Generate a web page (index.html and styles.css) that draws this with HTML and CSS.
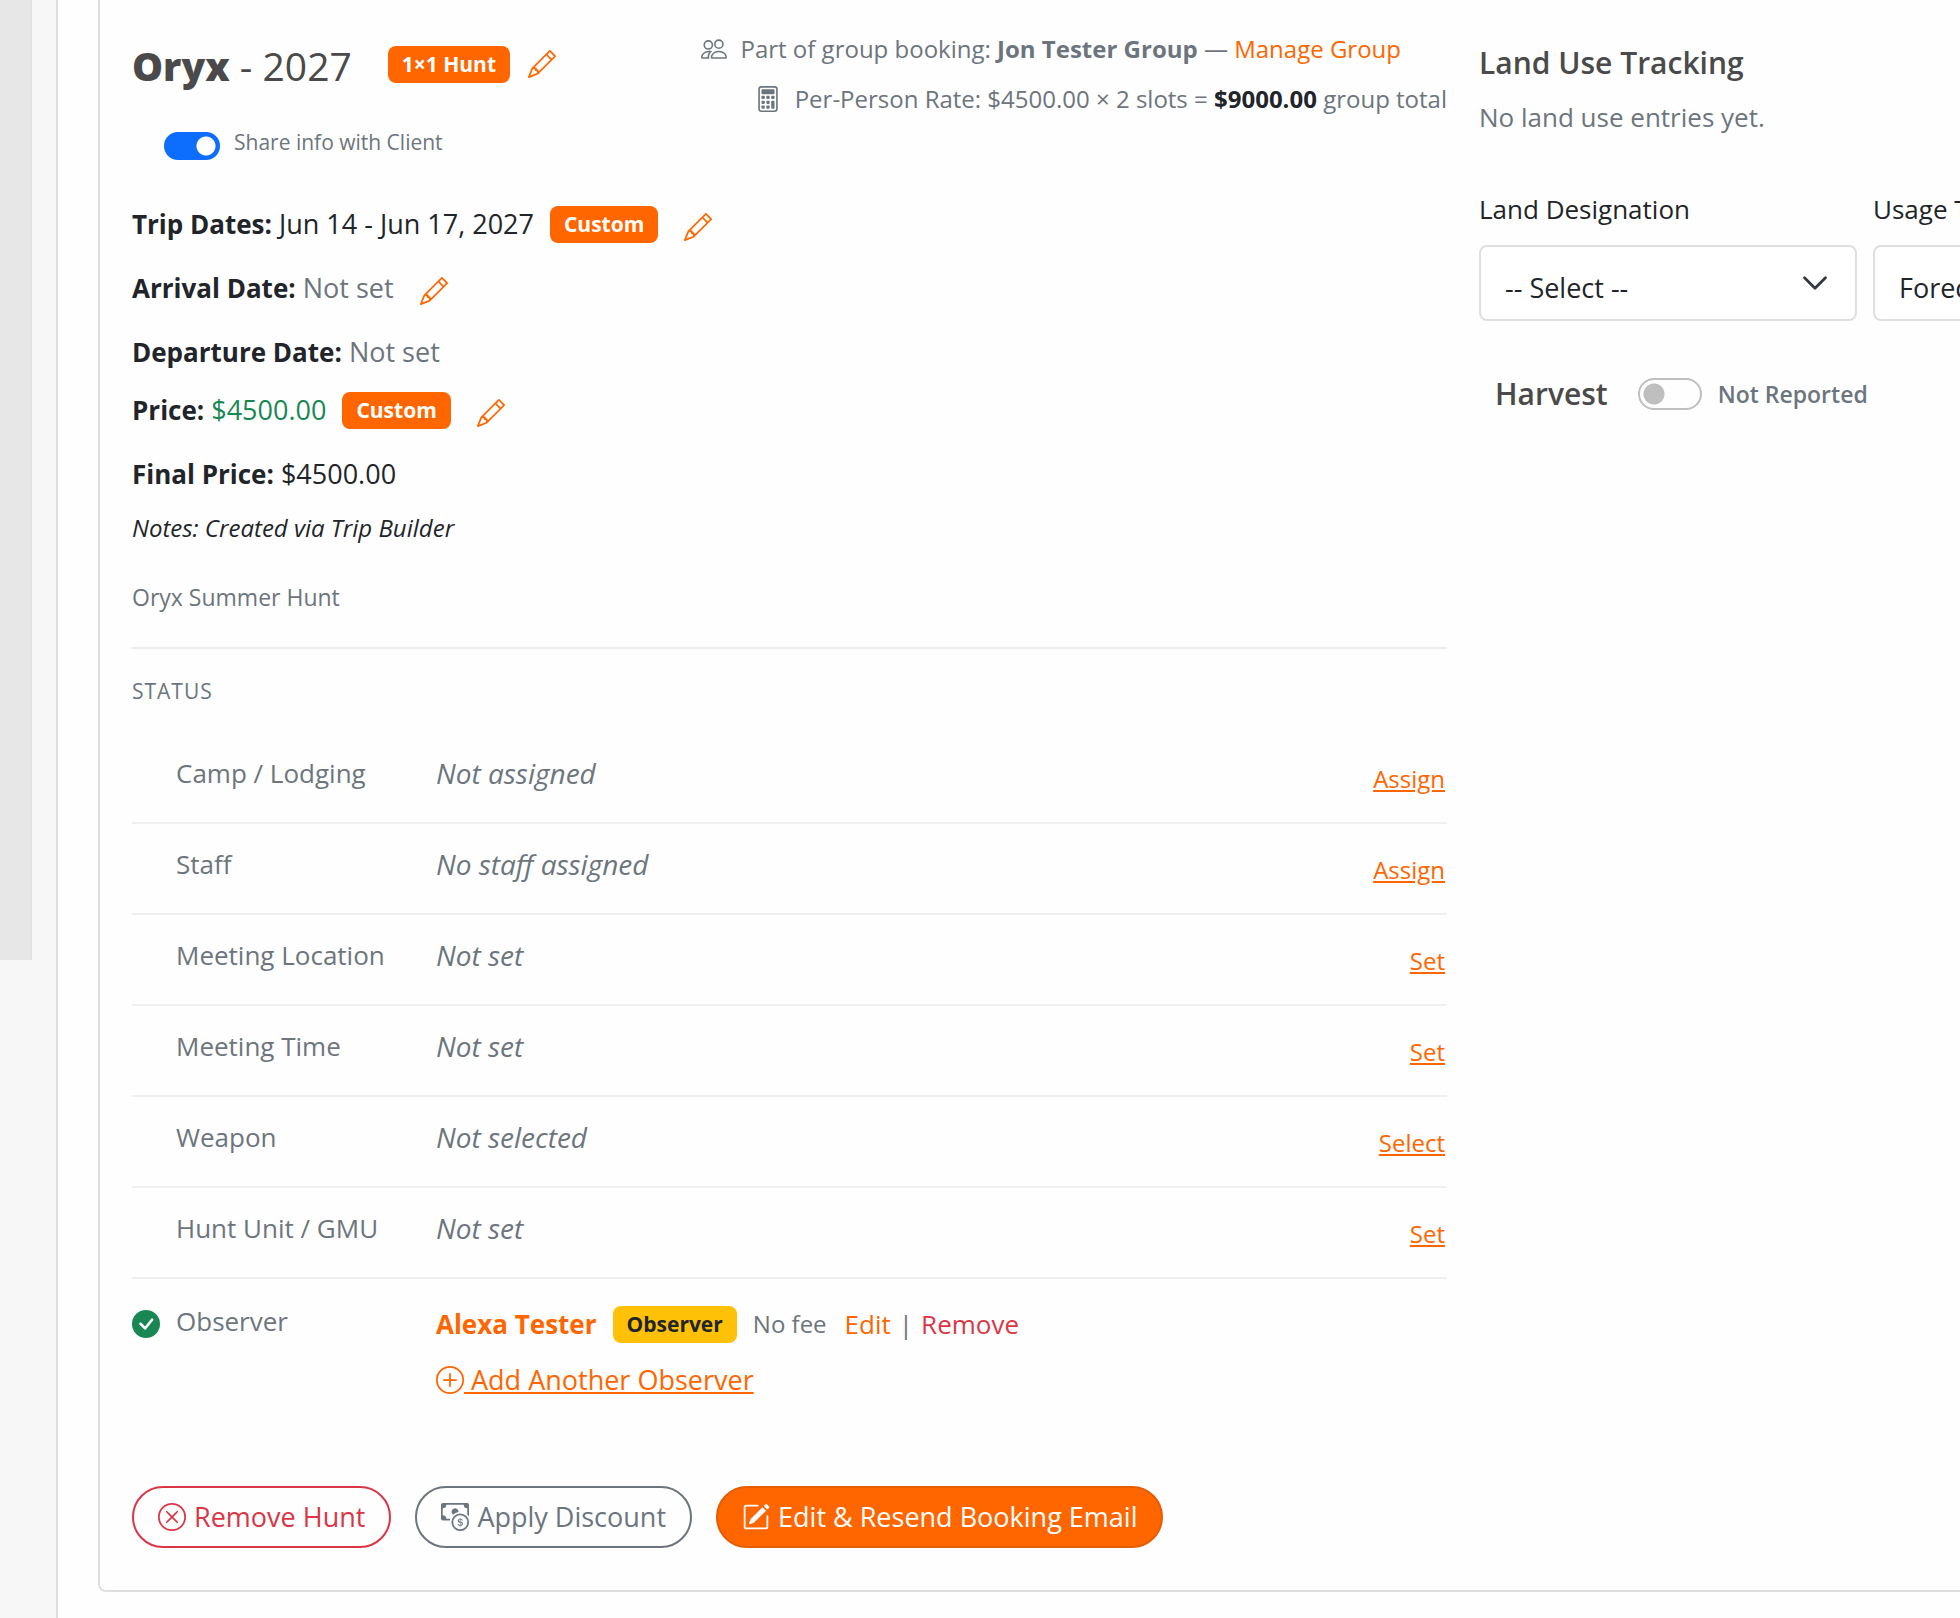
FILE: index.html
```html
<!DOCTYPE html>
<html lang="en">
<head>
    <meta charset="UTF-8">
    <title>Oryx - 2027</title>
    <link rel="stylesheet" href="styles.css">
</head>
<body>
    <!-- shared icons -->
    <svg class="sprite" aria-hidden="true">
        <symbol id="pencil" viewBox="0 0 16 16">
            <path d="M12.146.146a.5.5 0 0 1 .708 0l3 3a.5.5 0 0 1 0 .708l-10 10a.5.5 0 0 1-.168.11l-5 2a.5.5 0 0 1-.65-.65l2-5a.5.5 0 0 1 .11-.168zM11.207 2.5 13.5 4.793 14.793 3.5 12.5 1.207zm1.586 3L10.5 3.207 4 9.707V10h.5a.5.5 0 0 1 .5.5v.5h.5a.5.5 0 0 1 .5.5v.5h.293zm-9.761 5.175-.106.106-1.528 3.821 3.821-1.528.106-.106A.5.5 0 0 1 5 12.5V12h-.5a.5.5 0 0 1-.5-.5V11h-.5a.5.5 0 0 1-.468-.325"/>
        </symbol>
        <symbol id="people" viewBox="0 0 16 16">
            <path d="M15 14s1 0 1-1-1-4-5-4-5 3-5 4 1 1 1 1zm-7.978-1L7 12.996c.001-.264.167-1.03.76-1.72C8.312 10.629 9.282 10 11 10c1.717 0 2.687.63 3.24 1.276.593.69.758 1.457.76 1.72l-.008.002-.014.002zM11 7a2 2 0 1 0 0-4 2 2 0 0 0 0 4m3-2a3 3 0 1 1-6 0 3 3 0 0 1 6 0M6.936 9.28a6 6 0 0 0-1.23-.247A7 7 0 0 0 5 9c-4 0-5 3-5 4q0 1 1 1h4.216A2.24 2.24 0 0 1 5 13c0-1.01.377-2.042 1.09-2.904.243-.294.526-.569.846-.816M4.92 10A5.5 5.5 0 0 0 4 13H1c0-.26.164-1.03.76-1.724.545-.636 1.492-1.256 3.16-1.275ZM1.5 5.5a3 3 0 1 1 6 0 3 3 0 0 1-6 0m3-2a2 2 0 1 0 0 4 2 2 0 0 0 0-4"/>
        </symbol>
        <symbol id="calculator" viewBox="0 0 16 16">
            <path d="M12 1a1 1 0 0 1 1 1v12a1 1 0 0 1-1 1H4a1 1 0 0 1-1-1V2a1 1 0 0 1 1-1zM4 0a2 2 0 0 0-2 2v12a2 2 0 0 0 2 2h8a2 2 0 0 0 2-2V2a2 2 0 0 0-2-2z"/>
            <rect x="4" y="2" width="8" height="3" rx=".5"/>
            <rect x="4" y="6" width="2" height="2" rx=".5"/>
            <rect x="7" y="6" width="2" height="2" rx=".5"/>
            <rect x="10" y="6" width="2" height="2" rx=".5"/>
            <rect x="4" y="9" width="2" height="2" rx=".5"/>
            <rect x="7" y="9" width="2" height="2" rx=".5"/>
            <rect x="4" y="12" width="2" height="2" rx=".5"/>
            <rect x="7" y="12" width="2" height="2" rx=".5"/>
            <rect x="10" y="9" width="2" height="5" rx=".5"/>
        </symbol>
        <symbol id="check-fill" viewBox="0 0 16 16">
            <path d="M16 8A8 8 0 1 1 0 8a8 8 0 0 1 16 0m-3.97-3.03a.75.75 0 0 0-1.08.022L7.477 9.417 5.384 7.323a.75.75 0 0 0-1.06 1.06L6.97 11.03a.75.75 0 0 0 1.079-.02l3.992-4.99a.75.75 0 0 0-.01-1.05z"/>
        </symbol>
        <symbol id="plus-circle" viewBox="0 0 16 16">
            <path d="M8 15A7 7 0 1 1 8 1a7 7 0 0 1 0 14m0 1A8 8 0 1 0 8 0a8 8 0 0 0 0 16"/>
            <path d="M8 4a.5.5 0 0 1 .5.5v3h3a.5.5 0 0 1 0 1h-3v3a.5.5 0 0 1-1 0v-3h-3a.5.5 0 0 1 0-1h3v-3A.5.5 0 0 1 8 4"/>
        </symbol>
        <symbol id="x-circle" viewBox="0 0 16 16">
            <path d="M8 15A7 7 0 1 1 8 1a7 7 0 0 1 0 14m0 1A8 8 0 1 0 8 0a8 8 0 0 0 0 16"/>
            <path d="M4.646 4.646a.5.5 0 0 1 .708 0L8 7.293l2.646-2.647a.5.5 0 0 1 .708.708L8.707 8l2.647 2.646a.5.5 0 0 1-.708.708L8 8.707l-2.646 2.647a.5.5 0 0 1-.708-.708L7.293 8 4.646 5.354a.5.5 0 0 1 0-.708"/>
        </symbol>
        <symbol id="cash-coin" viewBox="0 0 16 16">
            <path fill-rule="evenodd" d="M11 15a4 4 0 1 0 0-8 4 4 0 0 0 0 8m5-4a5 5 0 1 1-10 0 5 5 0 0 1 10 0"/>
            <path d="M9.438 11.944c.047.596.518 1.06 1.363 1.116v.44h.375v-.443c.875-.061 1.386-.529 1.386-1.207 0-.618-.39-.936-1.09-1.1l-.296-.07v-1.2c.376.043.614.248.671.532h.658c-.047-.575-.54-1.024-1.329-1.073V8.5h-.375v.45c-.747.073-1.255.522-1.255 1.158 0 .562.378.92 1.007 1.066l.248.061v1.272c-.384-.058-.639-.27-.696-.563h-.668zm1.36-1.354c-.369-.085-.569-.26-.569-.522 0-.294.216-.514.572-.578v1.1zm.432.746c.449.104.655.272.655.569 0 .339-.257.571-.709.614v-1.195z"/>
            <path d="M1 0a1 1 0 0 0-1 1v8a1 1 0 0 0 1 1h4.083q.088-.517.258-1H3a2 2 0 0 0-2-2V3a2 2 0 0 0 2-2h10a2 2 0 0 0 2 2v3.528c.38.34.717.728 1 1.154V1a1 1 0 0 0-1-1z"/>
            <path d="M9.998 5.083 10 5a2 2 0 1 0-3.132 1.65 6 6 0 0 1 3.13-1.567"/>
        </symbol>
        <symbol id="pencil-square" viewBox="0 0 16 16">
            <path d="M15.502 1.94a.5.5 0 0 1 0 .706L14.459 3.69l-2-2L13.502.646a.5.5 0 0 1 .707 0l1.293 1.293zm-1.75 2.456-2-2L4.939 9.21a.5.5 0 0 0-.121.196l-.805 2.414a.25.25 0 0 0 .316.316l2.414-.805a.5.5 0 0 0 .196-.12l6.813-6.814z"/>
            <path fill-rule="evenodd" d="M1 13.5A1.5 1.5 0 0 0 2.5 15h11a1.5 1.5 0 0 0 1.5-1.5v-6a.5.5 0 0 0-1 0v6a.5.5 0 0 1-.5.5h-11a.5.5 0 0 1-.5-.5v-11a.5.5 0 0 1 .5-.5H9a.5.5 0 0 0 0-1H2.5A1.5 1.5 0 0 0 1 2.5z"/>
        </symbol>
    </svg>

    <div class="page">
        <aside class="sidebar">
            <div class="sidebar-panel"></div>
        </aside>

        <main class="content">
            <div class="hunt-card">
                <section class="hunt-main">
                    <header class="hunt-header">
                        <div class="hunt-heading">
                            <div class="title-row">
                                <h2 class="hunt-title"><strong>Oryx</strong> - 2027</h2>
                                <span class="badge">1×1 Hunt</span>
                                <button class="icon-btn" type="button" aria-label="Edit hunt type"><svg class="icon"><use href="#pencil"/></svg></button>
                            </div>
                            <div class="share-row">
                                <input class="switch" type="checkbox" role="switch" id="shareInfo" checked>
                                <label for="shareInfo">Share info with Client</label>
                            </div>
                        </div>
                        <div class="group-info">
                            <p class="group-booking">
                                <svg class="icon icon-sm"><use href="#people"/></svg>
                                <span>Part of group booking: <strong>Jon Tester Group</strong> — <a href="#">Manage Group</a></span>
                            </p>
                            <p>
                                <svg class="icon icon-sm"><use href="#calculator"/></svg>
                                <span>Per-Person Rate: $4500.00 × 2 slots = <strong class="dark">$9000.00</strong> group total</span>
                            </p>
                        </div>
                    </header>

                    <div class="details">
                        <div class="detail">
                            <span><strong>Trip Dates:</strong> Jun 14 - Jun 17, 2027</span>
                            <span class="badge">Custom</span>
                            <button class="icon-btn spaced" type="button" aria-label="Edit trip dates"><svg class="icon"><use href="#pencil"/></svg></button>
                        </div>
                        <div class="detail">
                            <span><strong>Arrival Date:</strong> <span class="muted">Not set</span></span>
                            <button class="icon-btn spaced" type="button" aria-label="Edit arrival date"><svg class="icon"><use href="#pencil"/></svg></button>
                        </div>
                        <div class="detail detail-tight">
                            <span><strong>Departure Date:</strong> <span class="muted">Not set</span></span>
                        </div>
                        <div class="detail">
                            <span><strong>Price:</strong> <span class="price">$4500.00</span></span>
                            <span class="badge">Custom</span>
                            <button class="icon-btn spaced" type="button" aria-label="Edit price"><svg class="icon"><use href="#pencil"/></svg></button>
                        </div>
                        <div class="detail detail-tight">
                            <span><strong>Final Price:</strong> $4500.00</span>
                        </div>
                    </div>
                    <p class="notes">Notes: Created via Trip Builder</p>
                    <p class="hunt-name">Oryx Summer Hunt</p>

                    <h3 class="status-title">Status</h3>
                    <div class="status-row">
                        <span></span>
                        <span class="label">Camp / Lodging</span>
                        <em>Not assigned</em>
                        <a href="#">Assign</a>
                    </div>
                    <div class="status-row">
                        <span></span>
                        <span class="label">Staff</span>
                        <em>No staff assigned</em>
                        <a href="#">Assign</a>
                    </div>
                    <div class="status-row">
                        <span></span>
                        <span class="label">Meeting Location</span>
                        <em>Not set</em>
                        <a href="#">Set</a>
                    </div>
                    <div class="status-row">
                        <span></span>
                        <span class="label">Meeting Time</span>
                        <em>Not set</em>
                        <a href="#">Set</a>
                    </div>
                    <div class="status-row">
                        <span></span>
                        <span class="label">Weapon</span>
                        <em>Not selected</em>
                        <a href="#">Select</a>
                    </div>
                    <div class="status-row">
                        <span></span>
                        <span class="label">Hunt Unit / GMU</span>
                        <em>Not set</em>
                        <a href="#">Set</a>
                    </div>
                    <div class="observer-row">
                        <svg class="icon done"><use href="#check-fill"/></svg>
                        <span class="label">Observer</span>
                        <div class="observers">
                            <div class="observer">
                                <a class="observer-name" href="#">Alexa Tester</a>
                                <span class="badge badge-warning">Observer</span>
                                <span class="fee">No fee</span>
                                <span class="observer-actions"><button class="text-btn" type="button">Edit</button><span class="bar">|</span><button class="text-btn danger" type="button">Remove</button></span>
                            </div>
                            <a class="add-observer" href="#"><svg class="icon"><use href="#plus-circle"/></svg><span>&nbsp;Add Another Observer</span></a>
                        </div>
                    </div>

                    <div class="actions">
                        <button class="btn btn-danger" type="button"><svg class="icon"><use href="#x-circle"/></svg>Remove Hunt</button>
                        <button class="btn btn-secondary" type="button"><svg class="icon"><use href="#cash-coin"/></svg>Apply Discount</button>
                        <button class="btn btn-primary" type="button"><svg class="icon"><use href="#pencil-square"/></svg>Edit &amp; Resend Booking Email</button>
                    </div>
                </section>

                <section class="hunt-side">
                    <h3 class="side-title">Land Use Tracking</h3>
                    <p class="side-empty">No land use entries yet.</p>
                    <div class="fields">
                        <div class="field">
                            <label for="landDesignation">Land Designation</label>
                            <select id="landDesignation">
                                <option>-- Select --</option>
                            </select>
                        </div>
                        <div class="field">
                            <label for="usageType">Usage Type</label>
                            <select id="usageType">
                                <option>Forecast</option>
                            </select>
                        </div>
                    </div>
                    <div class="harvest">
                        <h3 class="side-title">Harvest</h3>
                        <input class="switch switch-lg" type="checkbox" role="switch" id="harvest">
                        <label for="harvest">Not Reported</label>
                    </div>
                </section>
            </div>
        </main>
    </div>
</body>
</html>
```
FILE: styles.css
```css
* {
    margin: 0;
    padding: 0;
    box-sizing: border-box;
}

body {
    font-family: "Open Sans", "Noto Sans", sans-serif;
    font-size: 26px;
    line-height: 40px;
    color: #212529;
    background: #fefefe;
    overflow: hidden;
}

a {
    color: #ff6600;
}

button {
    font: inherit;
    cursor: pointer;
}

.sprite {
    display: none;
}

.icon {
    width: 28px;
    height: 28px;
    flex: none;
    fill: currentColor;
}

.icon-sm {
    width: 26px;
    height: 26px;
}

.muted {
    color: #6c757d;
}

.price {
    color: #198754;
}

/* Page frame */
.page {
    display: flex;
    min-height: 100vh;
}

.sidebar {
    width: 58px;
    flex: none;
    background: #f7f7f7;
    border-right: 2px solid #dedede;
}

.sidebar-panel {
    width: 32px;
    height: 960px;
    background: #e7e7e7;
    border-right: 2px solid #e3e3e3;
}

.content {
    flex: 1;
    min-width: 0;
    padding-left: 40px;
}

.hunt-card {
    display: grid;
    grid-template-columns: minmax(0, 1fr) 481px;
    column-gap: 32px;
    padding: 24px 0 42px 32px;
    border: 2px solid #dedede;
    border-width: 0 0 2px 2px;
    border-radius: 0 0 0 8px;
}

/* Header */
.hunt-header {
    display: flex;
    justify-content: space-between;
}

.title-row {
    display: flex;
    align-items: center;
    height: 80px;
}

.hunt-title {
    margin-right: 36px;
    padding-top: 4px;
    font-size: 39px;
    font-weight: 500;
    color: #4a4a4a;
}

.hunt-title strong {
    font-weight: 800;
}

.badge {
    padding: 0 14px;
    border-radius: 8px;
    background: #ff6600;
    color: #fff;
    font-size: 21px;
    font-weight: 700;
    line-height: 37px;
}

.badge-warning {
    background: #ffc107;
    color: #212529;
}

.icon-btn {
    display: flex;
    margin-left: 18px;
    border: none;
    background: none;
    color: #ff6600;
}

.icon-btn.spaced {
    margin-left: 26px;
    padding-top: 6px;
}

.share-row {
    display: flex;
    align-items: flex-start;
    gap: 14px;
    height: 60px;
    padding: 22px 0 0 32px;
}

.share-row .switch {
    margin-top: 6px;
}

.share-row label {
    color: #6c757d;
    font-size: 21px;
    line-height: 32px;
}

.switch {
    appearance: none;
    width: 56px;
    height: 28px;
    border-radius: 28px;
    border: 2px solid #bfbfbf;
    background: radial-gradient(circle, #bfbfbf 10px, transparent 11px) left center / 28px 28px no-repeat;
}

.switch:checked {
    border-color: #0d6efd;
    background: #0d6efd radial-gradient(circle, #fff 9px, transparent 10px) right center / 24px 24px no-repeat;
}

.switch-lg {
    width: 64px;
    height: 32px;
}

.group-info {
    color: #6c757d;
    font-size: 24px;
}

.group-info p {
    display: flex;
    align-items: center;
    justify-content: flex-end;
    gap: 14px;
    height: 50px;
}

.group-info .group-booking {
    padding-right: 46px;
}

.group-info a {
    text-decoration: none;
}

.dark {
    color: #212529;
}

/* Details */
.details {
    padding-top: 28px;
    font-size: 27px;
}

.details strong {
    font-size: 26px;
}

.detail {
    display: flex;
    align-items: center;
    height: 64px;
}

.detail .badge {
    margin-left: 16px;
}

.detail-tight {
    height: 58px;
    padding-top: 6px;
}

.notes {
    padding-top: 8px;
    font-size: 24px;
    font-style: italic;
}

.hunt-name {
    padding: 29px 0 30px;
    border-bottom: 2px solid #e9ecef;
    color: #6c757d;
    font-size: 23px;
}

/* Status */
.status-title {
    padding: 22px 0;
    color: #6c757d;
    font-size: 21px;
    font-weight: 400;
    letter-spacing: 1px;
    text-transform: uppercase;
}

.status-row,
.observer-row {
    display: grid;
    grid-template-columns: 28px 244px 1fr auto;
    column-gap: 16px;
    color: #6c757d;
}

.status-row {
    align-items: start;
    height: 91px;
    padding: 20px 2px 0 0;
    border-bottom: 2px solid #f0f0f0;
}

.status-row em {
    font-size: 28px;
}

.status-row a {
    padding-top: 6px;
    font-size: 24px;
}

.observer-row {
    padding-top: 22px;
}

.done {
    margin-top: 9px;
    color: #198754;
}

.observer {
    display: flex;
    align-items: center;
    padding-top: 3px;
}

.observer-name {
    margin-right: 16px;
    font-weight: 700;
    text-decoration: none;
}

.fee {
    margin: 0 18px 0 16px;
    font-size: 24px;
}

.observer-actions {
    display: flex;
    gap: 8px;
}

.text-btn {
    border: none;
    background: none;
    color: #ff6600;
}

.danger {
    color: #dc3545;
}

.bar {
    color: #6c757d;
}

.add-observer {
    display: inline-flex;
    align-items: center;
    padding-top: 16px;
    font-size: 27px;
}

/* Actions */
.actions {
    display: flex;
    gap: 24px;
    padding-top: 82px;
}

.btn {
    display: flex;
    align-items: center;
    gap: 8px;
    height: 62px;
    padding: 0 24px;
    border: 2px solid currentColor;
    border-radius: 32px;
    background: transparent;
    font-size: 27px;
}

.btn-danger {
    color: #dc3545;
}

.btn-secondary {
    color: #6c757d;
}

.btn-primary {
    border-color: #e65c00;
    background: #ff6600;
    color: #fff;
}

/* Right column */
.hunt-side {
    overflow: hidden;
    padding-top: 19px;
}

.side-title {
    color: #4a4a4a;
    font-size: 30px;
    font-weight: 600;
}

.side-empty {
    padding-top: 14px;
    color: #6c757d;
}

.fields {
    display: flex;
    gap: 16px;
    padding-top: 52px;
}

.field {
    flex: none;
    width: 378px;
}

.field label {
    display: block;
}

.field select {
    appearance: none;
    display: block;
    width: 100%;
    height: 76px;
    margin-top: 16px;
    padding: 10px 64px 0 24px;
    border: 2px solid #dfdfdf;
    border-radius: 8px;
    background: #fff url("data:image/svg+xml,%3Csvg xmlns='http://www.w3.org/2000/svg' viewBox='0 0 16 16'%3E%3Cpath fill='none' stroke='%23343a40' stroke-linecap='round' stroke-linejoin='round' stroke-width='1.6' d='m2 5 6 6 6-6'/%3E%3C/svg%3E") right 26px center / 28px 28px no-repeat;
    color: #212529;
    font: inherit;
    font-size: 27px;
}

.harvest {
    display: flex;
    align-items: center;
    padding: 53px 0 0 16px;
}

.harvest .switch {
    margin: 0 16px 0 30px;
}

.harvest label {
    color: #6c757d;
    font-size: 23px;
    font-weight: 600;
}
```
